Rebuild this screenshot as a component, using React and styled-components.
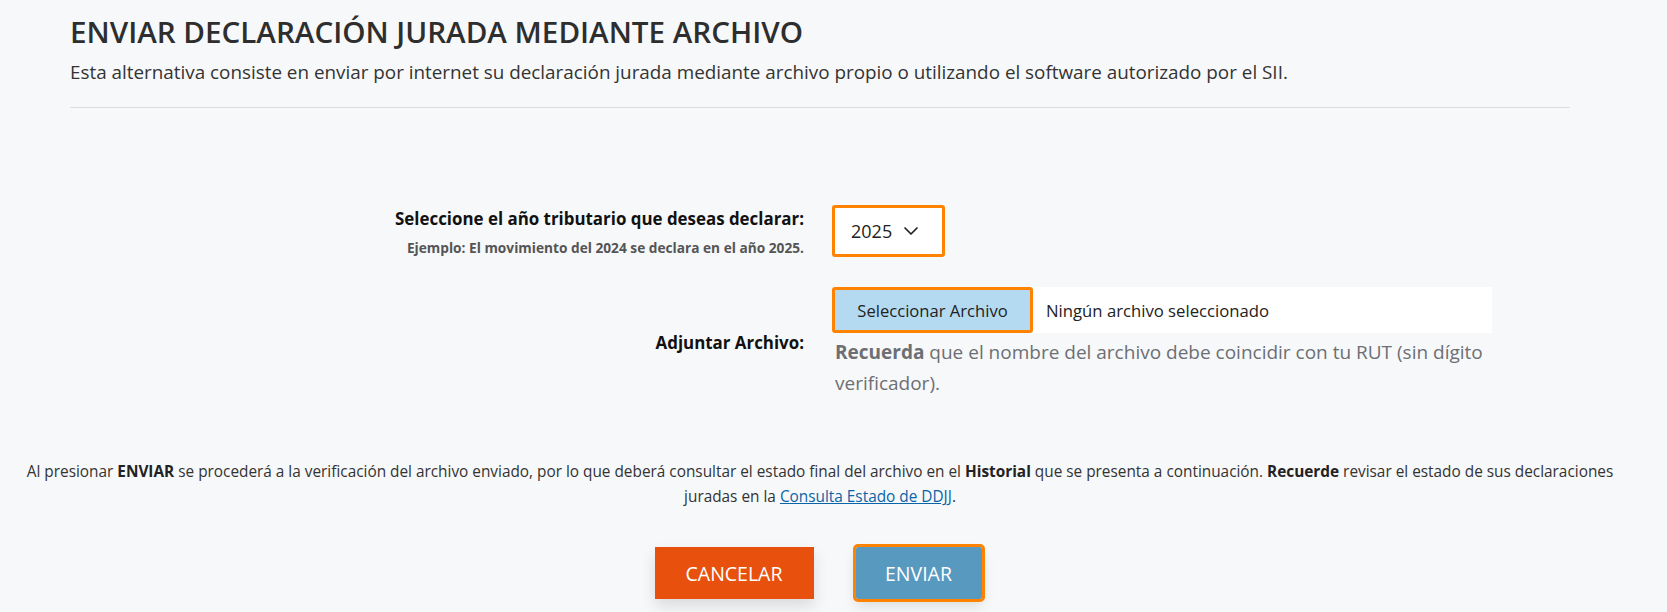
import React from 'react';
import styled, { createGlobalStyle } from 'styled-components';
import { ChevronDown } from 'lucide-react';

const COLORS = {
  BG: '#f7f8fa',
  TEXT: '#333333',
  MUTED: '#6c6f73',
  ORANGE: '#ff8200',
  FILE_BTN: '#b4daf1',
  CANCEL: '#e7510d',
  SEND: '#5899bf',
  LINK: '#0a64a8',
};

const GlobalStyle = createGlobalStyle`
  body {
    margin: 0;
    background: ${COLORS.BG};
    font-family: "Open Sans", "Noto Sans", sans-serif;
    color: ${COLORS.TEXT};
  }
`;

function App() {
  return (
    <Page>
      <GlobalStyle />
      <Header>
        <Title>ENVIAR DECLARACIÓN JURADA MEDIANTE ARCHIVO</Title>
        <Subtitle>
          Esta alternativa consiste en enviar por internet su declaración jurada mediante archivo propio o utilizando el software autorizado por el SII.
        </Subtitle>
      </Header>

      <Form>
        <LabelCell>
          <Label>Seleccione el año tributario que deseas declarar:</Label>
          <Hint>Ejemplo: El movimiento del 2024 se declara en el año 2025.</Hint>
        </LabelCell>
        <div>
          <YearSelect>
            <span>2025</span>
            <ChevronDown size={24} strokeWidth={1.7} />
          </YearSelect>
        </div>

        <LabelCell>
          <Label>Adjuntar Archivo:</Label>
        </LabelCell>
        <div>
          <FileRow>
            <FileButton type="button">Seleccionar Archivo</FileButton>
            <FileName>Ningún archivo seleccionado</FileName>
          </FileRow>
          <Reminder>
            <b>Recuerda</b> que el nombre del archivo debe coincidir con tu RUT (sin dígito verificador).
          </Reminder>
        </div>
      </Form>

      <Notice>
        Al presionar <b>ENVIAR</b> se procederá a la verificación del archivo enviado, por lo que deberá consultar el estado final del archivo en el <b>Historial</b> que se presenta a continuación. <b>Recuerde</b> revisar el estado de sus declaraciones juradas en la <a href="#">Consulta Estado de DDJJ</a>.
      </Notice>

      <Actions>
        <ActionButton $bg={COLORS.CANCEL} $width={159}>CANCELAR</ActionButton>
        <ActionButton $bg={COLORS.SEND} $width={126} $focused>ENVIAR</ActionButton>
      </Actions>
    </Page>
  );
}

const Page = styled.div`
  width: 1640px;
  min-height: 612px;
`;

const Header = styled.div`
  margin: 0 70px;
  padding-top: 15px;
  padding-bottom: 22px;
  border-bottom: 1px solid #dcdde0;
`;

const Title = styled.h1`
  margin: 0;
  font-size: 29.6px;
  line-height: 34px;
  font-weight: 540;
  color: #2e2e2e;
`;

const Subtitle = styled.p`
  margin: 10px 0 0;
  font-size: 18.85px;
  line-height: 26px;
  color: #333;
`;

const Form = styled.div`
  display: grid;
  grid-template-columns: 804px 660px;
  column-gap: 28px;
  row-gap: 30px;
  align-items: center;
  margin-top: 97px;
`;

const LabelCell = styled.div`
  text-align: right;
`;

const Label = styled.div`
  font-size: 16.9px;
  line-height: 28px;
  font-weight: 700;
  color: #111;
`;

const Hint = styled.div`
  margin-top: 6px;
  font-size: 13.7px;
  line-height: 18px;
  font-weight: 700;
  color: #555;
`;

const YearSelect = styled.div`
  display: flex;
  align-items: center;
  justify-content: space-between;
  box-sizing: border-box;
  width: 113px;
  height: 52px;
  padding: 0 19px 0 16px;
  background: #fff;
  border: 3px solid ${COLORS.ORANGE};
  border-radius: 3px;
  font-size: 18px;
  color: #222;
`;

const FileRow = styled.div`
  display: flex;
  align-items: center;
  height: 46px;
  background: #fff;
`;

const FileButton = styled.button`
  box-sizing: border-box;
  width: 201px;
  height: 46px;
  background: ${COLORS.FILE_BTN};
  border: 3px solid ${COLORS.ORANGE};
  border-radius: 3px;
  font-family: inherit;
  font-size: 16.6px;
  color: #222;
  padding: 0;
`;

const FileName = styled.span`
  margin-left: 13px;
  font-size: 16.7px;
  color: #222;
`;

const Reminder = styled.p`
  margin: 4px 0 0;
  padding-left: 3px;
  font-size: 19px;
  line-height: 31px;
  color: ${COLORS.MUTED};

  b {
    font-weight: 700;
  }
`;

const Notice = styled.p`
  margin: 60px 0 0;
  padding: 0 15px;
  text-align: center;
  font-size: 15.37px;
  line-height: 25px;
  color: #333;

  b {
    color: #222;
  }

  a {
    color: ${COLORS.LINK};
    text-decoration: underline;
  }
`;

const Actions = styled.div`
  display: flex;
  justify-content: center;
  gap: 42px;
  margin-top: 38px;
  padding-right: 4px;
`;

const ActionButton = styled.button`
  width: ${p => p.$width}px;
  height: 52px;
  border: none;
  background: ${p => p.$bg};
  color: #fff;
  font-family: inherit;
  font-size: 19.5px;
  box-shadow: 0 7px 14px rgba(0, 0, 0, 0.12);
  outline: ${p => (p.$focused ? `3px solid ${COLORS.ORANGE}` : 'none')};
  border-radius: ${p => (p.$focused ? '2px' : '0')};
`;

export default App;
